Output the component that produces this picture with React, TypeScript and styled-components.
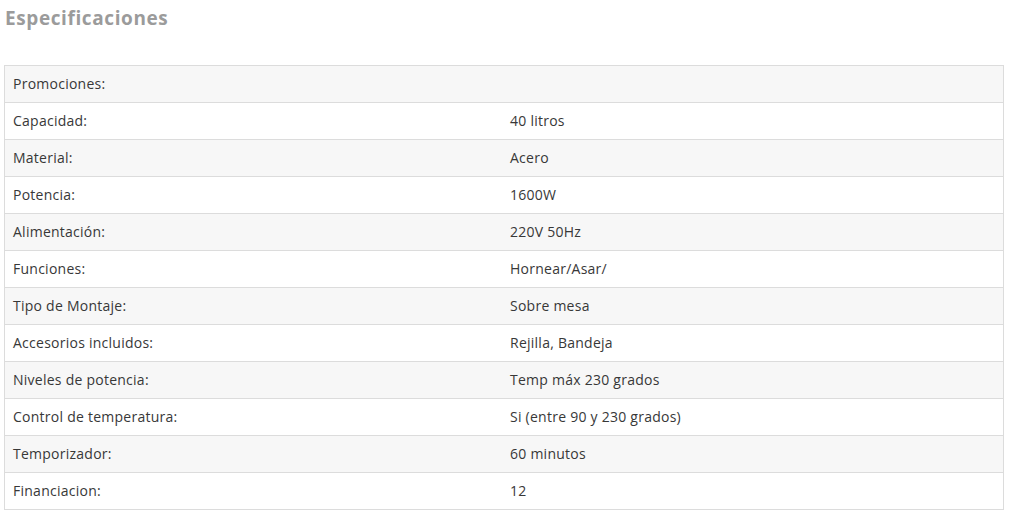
import React from "react";
import styled, { createGlobalStyle } from "styled-components";

const Global = createGlobalStyle`
  html, body { margin: 0; padding: 0; background: #fff; }
  body { font-family: "Open Sans", "Liberation Sans", sans-serif; }
`;

const Page = styled.div`
  padding: 4px 0 0 4px;
  width: 1000px;
`;

const Title = styled.h2`
  margin: 0 0 0 1px;
  font-family: "Open Sans", "Liberation Sans", sans-serif;
  font-weight: 700;
  font-size: 19px;
  letter-spacing: 0.6px;
  line-height: 28px;
  color: #9b9b9b;
  height: 61px;
`;

const Table = styled.div`
  border: 1px solid #dcdcdc;
  border-bottom: none;
  width: 998px;
`;

const Row = styled.div<{ $striped: boolean }>`
  display: grid;
  grid-template-columns: 497px 1fr;
  height: 36px;
  border-bottom: 1px solid #dcdcdc;
  background: ${(p) => (p.$striped ? "#f7f7f7" : "#ffffff")};
`;

const Cell = styled.div`
  display: flex;
  align-items: center;
  padding: 0 8px 1px;
  font-size: 14px;
  letter-spacing: 0.25px;
  color: #383838;
  white-space: nowrap;
`;

const rows: [string, string][] = [
  ["Promociones:", ""],
  ["Capacidad:", "40 litros"],
  ["Material:", "Acero"],
  ["Potencia:", "1600W"],
  ["Alimentación:", "220V 50Hz"],
  ["Funciones:", "Hornear/Asar/"],
  ["Tipo de Montaje:", "Sobre mesa"],
  ["Accesorios incluidos:", "Rejilla, Bandeja"],
  ["Niveles de potencia:", "Temp máx 230 grados"],
  ["Control de temperatura:", "Si (entre 90 y 230 grados)"],
  ["Temporizador:", "60 minutos"],
  ["Financiacion:", "12"],
];

export default function App() {
  return (
    <Page>
      <Global />
      <Title>Especificaciones</Title>
      <Table>
        {rows.map(([k, v], i) => (
          <Row key={k} $striped={i % 2 === 0}>
            <Cell>{k}</Cell>
            <Cell>{v}</Cell>
          </Row>
        ))}
      </Table>
    </Page>
  );
}
